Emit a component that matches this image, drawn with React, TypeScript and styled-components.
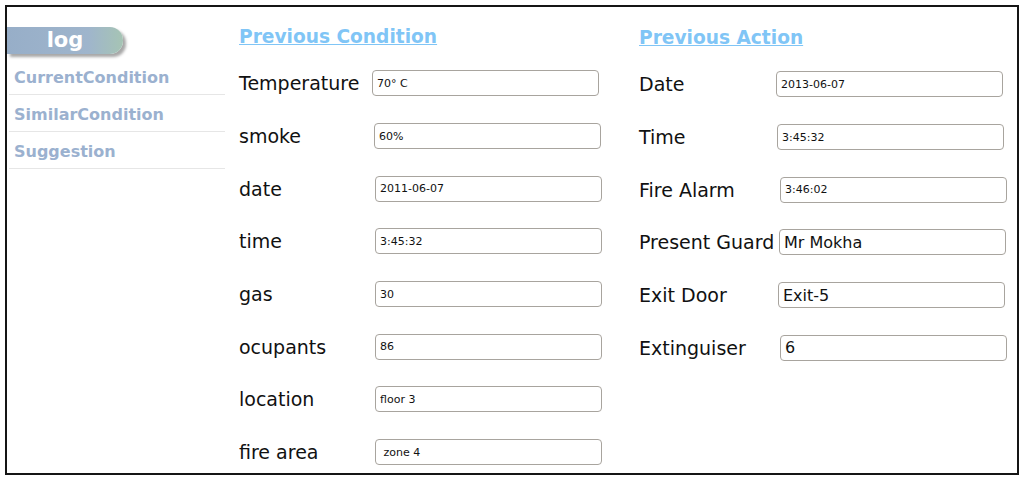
import * as React from 'react';
import styled, { createGlobalStyle } from 'styled-components';

const GlobalStyle = createGlobalStyle`
  body {
    margin: 0;
    background: #fff;
    font-family: "DejaVu Sans", Verdana, sans-serif;
  }
`;

type Field = { label: string; value: string; big?: boolean; shift?: number };

const condition: Field[] = [
  { label: 'Temperature', value: '70° C', shift: 0 },
  { label: 'smoke', value: '60%', shift: 2 },
  { label: 'date', value: '2011-06-07', shift: 3 },
  { label: 'time', value: '3:45:32', shift: 3 },
  { label: 'gas', value: '30', shift: 3 },
  { label: 'ocupants', value: '86', shift: 3 },
  { label: 'location', value: 'floor 3', shift: 3 },
  { label: 'fire area', value: ' zone 4', shift: 3 },
];

const action: Field[] = [
  { label: 'Date', value: '2013-06-07' },
  { label: 'Time', value: '3:45:32', shift: 1 },
  { label: 'Fire Alarm', value: '3:46:02', shift: 4 },
  { label: 'Present Guard', value: 'Mr Mokha', big: true, shift: 3 },
  { label: 'Exit Door', value: 'Exit-5', big: true, shift: 2 },
  { label: 'Extinguiser', value: '6', big: true, shift: 4 },
];

const menu = ['CurrentCondition', 'SimilarCondition', 'Suggestion'];

const App: React.FC = () => (
  <>
    <GlobalStyle />
    <Frame>
      <Sidebar>
        <LogTab>log</LogTab>
        <Menu>
          {menu.map((m) => (
            <MenuItem key={m}>{m}</MenuItem>
          ))}
        </Menu>
      </Sidebar>
      <Column $width={400}>
        <Heading>Previous Condition</Heading>
        {condition.map((f) => (
          <Row key={f.label} $labelWidth={133}>
            <Label>{f.label}</Label>
            <Input readOnly value={f.value} $big={f.big} $shift={f.shift ?? 0} />
          </Row>
        ))}
      </Column>
      <Column $width={380} $top={1}>
        <Heading>Previous Action</Heading>
        {action.map((f) => (
          <Row key={f.label} $labelWidth={137}>
            <Label>{f.label}</Label>
            <Input readOnly value={f.value} $big={f.big} $shift={f.shift ?? 0} />
          </Row>
        ))}
      </Column>
    </Frame>
  </>
);

const Frame = styled.div`
  margin: 5px;
  width: 1014px;
  height: 470px;
  box-sizing: border-box;
  border: 2px solid #151515;
  display: flex;
  overflow: hidden;
`;

const Sidebar = styled.div`
  width: 224px;
  flex-shrink: 0;
  padding-top: 20px;
`;

const LogTab = styled.div`
  width: 116px;
  height: 27px;
  background: linear-gradient(to right, #97aec8 0%, #9fb5cc 70%, #a6c4b4 100%);
  border-radius: 0 13px 13px 0;
  box-shadow: 3px 3px 3px rgba(0, 0, 0, 0.35);
  color: #fff;
  font-size: 21px;
  font-weight: bold;
  line-height: 26px;
  text-align: center;
`;

const Menu = styled.ul`
  list-style: none;
  margin: 4px 0 0 2px;
  padding: 0;
  width: 216px;
`;

const MenuItem = styled.li`
  height: 33px;
  padding: 3px 0 0 5px;
  border-bottom: 1px solid #e6e6e6;
  color: #9bb1cf;
  font-size: 16px;
  font-weight: bold;
  line-height: 34px;
`;

const Column = styled.div<{ $width: number; $top?: number }>`
  width: ${({ $width }) => $width}px;
  flex-shrink: 0;
  padding-top: ${({ $top }) => 17 + ($top ?? 0)}px;
  padding-left: 8px;
  box-sizing: border-box;
`;

const Heading = styled.div`
  height: 26px;
  margin-bottom: 7px;
  color: #80c5f6;
  font-size: 18.6px;
  font-weight: bold;
  text-decoration: underline;
  line-height: 26px;
`;

const Row = styled.div<{ $labelWidth: number }>`
  display: grid;
  grid-template-columns: ${({ $labelWidth }) => $labelWidth}px 230px;
  align-items: center;
  height: 52.7px;
`;

const Label = styled.div`
  color: #111;
  font-size: 19px;
  white-space: nowrap;
`;

const Input = styled.input<{ $big?: boolean; $shift: number }>`
  width: 227px;
  height: 26px;
  box-sizing: border-box;
  margin-left: ${({ $shift }) => $shift}px;
  border: 1px solid #a8a49e;
  border-radius: 4px;
  padding: 0 4px;
  font-family: "DejaVu Sans", Verdana, sans-serif;
  font-size: ${({ $big }) => ($big ? 16 : 11)}px;
  color: #111;
  background: #fff;
  outline: none;
`;

export default App;
